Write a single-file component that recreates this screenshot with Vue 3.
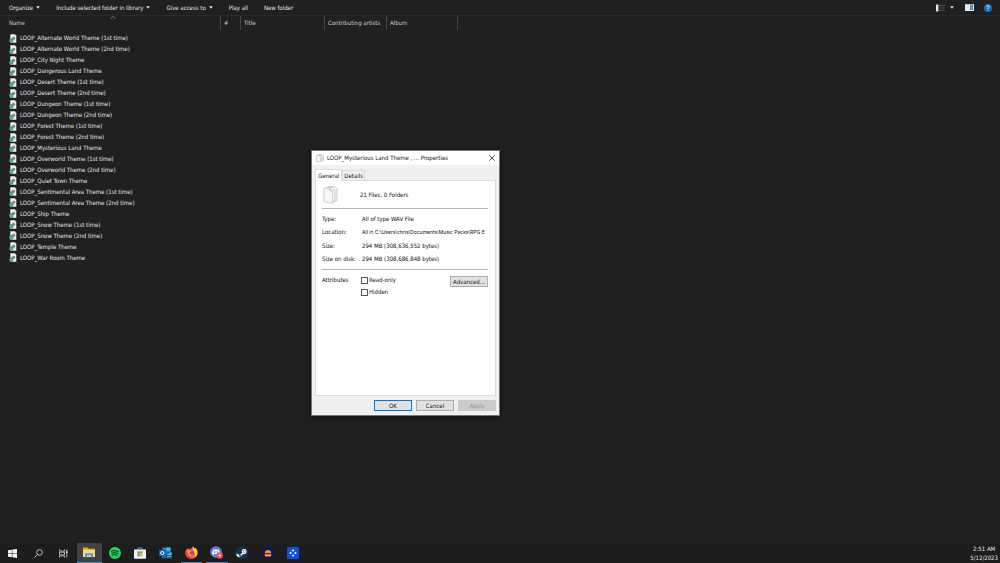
<script setup>
import { ref } from 'vue'

const commands = [
  { label: 'Organize', menu: true },
  { label: 'Include selected folder in library', menu: true },
  { label: 'Give access to', menu: true },
  { label: 'Play all', menu: false },
  { label: 'New folder', menu: false },
]

const files = [
  'LOOP_Alternate World Theme (1st time)',
  'LOOP_Alternate World Theme (2nd time)',
  'LOOP_City Night Theme',
  'LOOP_Dangerous Land Theme',
  'LOOP_Desert Theme (1st time)',
  'LOOP_Desert Theme (2nd time)',
  'LOOP_Dungeon Theme (1st time)',
  'LOOP_Dungeon Theme (2nd time)',
  'LOOP_Forest Theme (1st time)',
  'LOOP_Forest Theme (2nd time)',
  'LOOP_Mysterious Land Theme',
  'LOOP_Overworld Theme (1st time)',
  'LOOP_Overworld Theme (2nd time)',
  'LOOP_Quiet Town Theme',
  'LOOP_Sentimental Area Theme (1st time)',
  'LOOP_Sentimental Area Theme (2nd time)',
  'LOOP_Ship Theme',
  'LOOP_Snow Theme (1st time)',
  'LOOP_Snow Theme (2nd time)',
  'LOOP_Temple Theme',
  'LOOP_War Room Theme',
]

const details = [
  { label: 'Type:', value: 'All of type WAV File' },
  { label: 'Location:', value: 'All in C:\\Users\\chris\\Documents\\Music Packs\\RPG E', path: true },
  { label: 'Size:', value: '294 MB (308,636,552 bytes)' },
  { label: 'Size on disk:', value: '294 MB (308,686,848 bytes)' },
]

const readOnly = ref(false)
const hidden = ref(false)
</script>

<template>
  <div class="desktop">
    <header class="commands">
      <button v-for="c in commands" :key="c.label" class="command" type="button">
        {{ c.label }}
        <svg v-if="c.menu" class="caret" viewBox="0 0 5 3"><path d="M0 0h5L2.5 3z" fill="#d8d8d8" /></svg>
      </button>
      <span class="spacer"></span>
      <button class="tool view" type="button" aria-label="Change view">
        <svg width="9" height="8" viewBox="0 0 9 8">
          <path d="M0 .5h2.4v7H0z" fill="#e4e4e4" />
          <path d="M3.5 1.5h2M6.5 1.5h2M3.5 4h2M6.5 4h2M3.5 6.5h2M6.5 6.5h2" stroke="#777" stroke-width=".8" />
        </svg>
        <svg class="caret" viewBox="0 0 5 3"><path d="M0 0h5L2.5 3z" fill="#d8d8d8" /></svg>
      </button>
      <button class="tool" type="button" aria-label="Preview pane">
        <svg width="9" height="7" viewBox="0 0 9 7">
          <path d="M0 0h9v7H0z" fill="#e6ebf0" /><path d="M0 0h9v1H0z" fill="#a5c0d8" />
          <path d="M5 1h3v5H5z" fill="#4f93cc" />
        </svg>
      </button>
      <button class="tool" type="button" aria-label="Help">
        <svg width="8" height="8" viewBox="0 0 8 8">
          <circle cx="4" cy="4" r="4" fill="#0f6fc0" />
          <path d="M2.8 3c0-1.8 2.6-1.7 2.5-.1C5.3 3.9 4 3.8 4 5M4 5.7v.9" fill="none" stroke="#fff" stroke-width=".9" />
        </svg>
      </button>
    </header>

    <main class="browser">
      <div class="columns">
        <span class="column name">Name
          <svg class="sort" viewBox="0 0 6 3"><path d="M.5 2.7 3 .4l2.5 2.3" fill="none" stroke="#a0a0a0" stroke-width=".7" /></svg>
        </span>
        <span class="column number">#</span>
        <span class="column title">Title</span>
        <span class="column artists">Contributing artists</span>
        <span class="column album">Album</span>
      </div>
      <ul class="files">
        <li v-for="f in files" :key="f">
          <svg class="file-icon" width="8" height="9" viewBox="0 0 8 9">
            <path d="M1.300.2h4.500L7.300 1.700v7.100h-6z" fill="#f1f1f1" />
            <path d="M5.800.2v1.500h1.500" fill="#aaa" />
            <circle cx="4.600" cy="4.200" r="1.500" fill="#666" /><circle cx="4.800" cy="4" r=".6" fill="#eee" />
            <circle cx="2.300" cy="6.500" r="2.200" fill="#3c9c79" />
            <path d="m1.200 6.600.9.8 1.300-1.500" fill="none" stroke="#c4e8d8" stroke-width=".5" />
          </svg>
          <span>{{ f }}</span>
        </li>
      </ul>
    </main>

    <section class="dialog" role="dialog" aria-label="Properties">
      <div class="titlebar">
        <svg width="8" height="8" viewBox="0 0 8 8" fill="#fafafa" stroke="#aaa" stroke-width=".6">
          <path d="M3 .5h3l1.300 1.300v4.600H3z" /><path d="M1.800 1h3l1.300 1.300v4.600H1.800z" /><path d="M.6 1.600h3l1.300 1.200v4.800H.6z" />
        </svg>
        <span class="caption">LOOP_Mysterious Land Theme , ... Properties</span>
        <button class="close" type="button" aria-label="Close">
          <svg width="6" height="6" viewBox="0 0 6 6"><path d="m.4.4 5.200 5.200M5.600.4.4 5.600" stroke="#222" stroke-width=".8" /></svg>
        </button>
      </div>
      <div class="tabs">
        <button class="tab active" type="button">General</button>
        <button class="tab" type="button">Details</button>
      </div>
      <div class="page">
        <div class="summary">
          <svg width="15" height="18" viewBox="0 0 15 18" fill="#f6f6f6" stroke="#b3b3b3" stroke-width=".6">
            <path d="M5.500.5h6L14 3v11.500l-8.500-1z" />
            <path d="M3.200 1.200h6L12 4v12l-8.800-1.500z" />
            <path d="M.8 2.200h6L9.600 5v12.400L.8 15.800z" /><path d="M6.800 2.200V5h2.800" fill="#ddd" />
          </svg>
          <span>21 Files, 0 Folders</span>
        </div>
        <dl class="details">
          <template v-for="d in details" :key="d.label">
            <dt>{{ d.label }}</dt>
            <dd :class="{ path: d.path }">{{ d.value }}</dd>
          </template>
        </dl>
        <div class="attributes">
          <span>Attributes</span>
          <div class="checks">
            <label><input v-model="readOnly" type="checkbox" />Read-only</label>
            <label><input v-model="hidden" type="checkbox" />Hidden</label>
          </div>
          <button class="push" type="button">Advanced...</button>
        </div>
      </div>
      <div class="actions">
        <button class="push default" type="button">OK</button>
        <button class="push" type="button">Cancel</button>
        <button class="push" type="button" disabled>Apply</button>
      </div>
    </section>

    <footer class="taskbar">
      <nav class="apps">
        <button type="button" aria-label="Start">
          <svg width="9" height="9" viewBox="0 0 9 9"><path d="M0 1.200 3.900.7v3.500H0zM4.400.6 9 0v4.200H4.400zM0 4.700h3.900v3.500L0 7.700zM4.400 4.700H9V9l-4.600-.7z" fill="#f4f4f4" /></svg>
        </button>
        <button type="button" aria-label="Search">
          <svg width="9" height="9" viewBox="0 0 9 9" fill="none" stroke="#e2e2e2" stroke-width=".8"><circle cx="5.500" cy="3.400" r="2.800" /><path d="M3.500 5.400.4 8.600" /></svg>
        </button>
        <button type="button" aria-label="Task view">
          <svg width="9" height="9" viewBox="0 0 9 9" fill="none" stroke="#d5d5d5" stroke-width=".8"><path d="M.5.4v1.700h5V.4M.5 3.200h5v2.600h-5zM.5 8.600V6.900h5v1.700M7.800.4v8.200" /><path d="M7 2.300h1.600v1.800H7z" fill="#d5d5d5" stroke="none" /></svg>
        </button>
        <button class="open current" type="button" aria-label="File Explorer">
          <svg width="12" height="11" viewBox="0 0 12 11"><path d="M0 .5h4.400l1 1.300H12V10H0z" fill="#e9a82d" /><path d="M0 2.800h12V10H0z" fill="#fbd977" /><path d="M2 10.500V6.300h8v4.200H8V8.200H4v2.300z" fill="#4a9bd8" /></svg>
        </button>
        <button type="button" aria-label="Spotify">
          <svg width="12" height="12" viewBox="0 0 12 12"><circle cx="6" cy="6" r="6" fill="#1ed760" /><path d="M2.400 4.100c2.500-.8 5.200-.5 7.300.7M2.800 6.100c2.100-.6 4.400-.4 6.200.6M3.100 8c1.700-.5 3.600-.3 5.100.6" fill="none" stroke="#17291e" stroke-width="1" stroke-linecap="round" /></svg>
        </button>
        <button type="button" aria-label="Microsoft Store">
          <svg width="12" height="12" viewBox="0 0 12 12"><path d="M3.800 3V1h4.400v2" fill="none" stroke="#39a7e6" stroke-width="1" /><path d="M0 2.500h12v8.300q0 1-1 1H1q-1 0-1-1z" fill="#f0f2f4" /><path d="M3.500 4.400h2.300v2.300H3.500z" fill="#e35335" /><path d="M6.200 4.400h2.300v2.300H6.200z" fill="#7aae28" /><path d="M3.500 7.100h2.300v2.300H3.500z" fill="#2196d8" /><path d="M6.200 7.100h2.300v2.300H6.200z" fill="#eeb624" /></svg>
        </button>
        <button type="button" aria-label="Outlook">
          <svg width="13" height="12" viewBox="0 0 13 12"><path d="M3.500.5h8v6h-8z" fill="#1b8ad5" /><path d="M7.500.5h4v3h-4z" fill="#40bdf0" /><path d="M3 5h9.500v6.200H3z" fill="#1473bd" /><path d="m3.500 5 4.400 3.200L12.500 5v6.200z" fill="#50cdf7" /><path d="M0 2.800h6.600v6.400H0z" fill="#0b62aa" /><circle cx="3.300" cy="6" r="1.600" fill="none" stroke="#fff" stroke-width="1" /><path d="M7.300 8.200h5.200v3.300H7.300z" fill="#1c3b5c" /><path d="M8 9.800h3.700" stroke="#dfeffa" stroke-width=".8" /></svg>
        </button>
        <button class="open" type="button" aria-label="Firefox">
          <svg width="13" height="13" viewBox="0 0 13 13"><path d="M8 .4c1 .7 1.400 1.500 1.700 2.400l1-.8c1.300 1.600 2 3.200 1.800 5.100C12.200 10.500 9.700 12.800 6.400 12.800 3 12.800.4 10.300.4 7c0-2 .7-3.400 1.700-4.800l.4 1.500 1.400-1.600.7 1.500C5.500 3 6.800 2 8 .4z" fill="#ff6a2c" /><path d="M8 .4c1 .7 1.400 1.500 1.700 2.400l1-.8c1.300 1.600 2 3.200 1.800 5.100-.2 1.900-1.100 3.500-2.600 4.500C11.600 7 7 5.300 8 .4z" fill="#ffc832" /><path d="M.4 7c.2 3.300 2.700 5.800 6 5.800 1.700 0 3-.5 4.100-1.500C6 13 2.700 10.500 2.100 6z" fill="#f33a62" /><circle cx="6.600" cy="7.200" r="2.400" fill="#8646dc" /><path d="M2.500 4.800c1.400-.8 2.500.2 4.100.3 0 .9-1.400 1-1.700 1.600.1 1.600 1.800 2.200 3.300 1.400C6.700 11 2.500 9.500 2.500 4.800z" fill="#ff952e" /></svg>
        </button>
        <button class="open" type="button" aria-label="Discord">
          <svg width="13" height="13" viewBox="0 0 13 13"><circle cx="6" cy="6" r="5.800" fill="#7775e8" /><path d="M3.300 3.700q2.700-1 5.400 0Q10 5.700 9.900 8L8.300 8.700l-.7-.8H4.400l-.7.8L2.100 8Q2 5.700 3.300 3.700z" fill="#fff" /><circle cx="4.500" cy="6.100" r=".8" fill="#6664d8" /><circle cx="7.500" cy="6.100" r=".8" fill="#6664d8" /><circle cx="9.700" cy="9.500" r="3.200" fill="#e9515e" /><circle cx="9.700" cy="9.500" r="1.100" fill="#fff" /></svg>
        </button>
        <button type="button" aria-label="Steam">
          <svg width="12" height="12" viewBox="0 0 12 12"><circle cx="6" cy="6" r="6" fill="#143653" /><path d="M.2 6.500 3.800 8l2.500-2.300 1.500-2.500 2.700 1.500-1.300 2-2.800.9-2.100 2.300-1.900.3L.7 8.700z" fill="#f5f7f9" /><circle cx="8.200" cy="4.400" r="2.400" fill="#f5f7f9" /><circle cx="8.200" cy="4.400" r="1.200" fill="#4a6378" /><circle cx="8.200" cy="4.400" r=".8" fill="#f5f7f9" /><circle cx="4" cy="8.800" r="1" fill="#35536c" /></svg>
        </button>
        <button type="button" aria-label="Audio player">
          <svg width="12" height="12" viewBox="0 0 12 12"><circle cx="6" cy="6" r="5.800" fill="#0d1474" /><path d="M2.700 6Q3 3 6 3t3.300 3z" fill="#f28b32" /><path d="M2.700 6h6.600v1.200H2.700z" fill="#5e3220" /><path d="M2.700 7.200h6.600v1.400q0 1-1 1H3.700q-1 0-1-1z" fill="#ffa32f" /></svg>
        </button>
        <button type="button" aria-label="Game launcher">
          <svg width="12" height="12" viewBox="0 0 12 12"><rect width="12" height="12" rx="1" fill="#0b4fe0" /><path d="m6 2.200 1.300 1.300L6 4.800 4.700 3.500zM3.500 4.700 4.800 6 3.500 7.300 2.200 6zM8.500 4.700 9.800 6 8.500 7.300 7.200 6zM6 7.200l1.300 1.300L6 9.800 4.700 8.500z" fill="#fff" /></svg>
        </button>
      </nav>
      <div class="clock"><time>2:51 AM</time><time>5/12/2023</time></div>
    </footer>
  </div>
</template>

<style>
html, body { background: #202020; }
</style>

<style scoped>
* { box-sizing: border-box; }
button { margin: 0; padding: 0; border: 0; background: none; color: inherit; font: inherit; }
svg { display: block; flex: none; }
.desktop {
  position: relative; display: flex; flex-direction: column; min-height: 100vh;
  background: #202020; color: #e6e6e6;
  font: 6px/8px "DejaVu Sans Condensed", "Open Sans", sans-serif; white-space: nowrap; overflow: hidden;
}
.commands { display: flex; align-items: center; gap: 16px; height: 16px; padding: 0 8px 0 9px; border-bottom: 1px solid #2a2a2a; }
.command, .tool { display: flex; align-items: center; gap: 3px; }
.caret { width: 4px; height: 3px; }
.spacer { flex: 1; }
.tool.view { gap: 5px; margin-right: -5px; }
.tool:last-child { margin-left: -6px; }

.browser { flex: 1; }
.columns { display: flex; height: 14px; color: #cfcfcf; }
.column { position: relative; display: flex; align-items: center; padding-left: 3px; border-right: 1px solid #444; }
.name { width: 221px; padding-left: 9px; }
.number { width: 20px; }
.title { width: 84px; }
.artists { width: 62px; }
.album { width: 71px; }
.sort { position: absolute; left: 110px; top: 0; width: 6px; height: 3px; }
.files { display: grid; grid-auto-rows: 1fr; height: 230px; margin: 3px 0 0; padding: 0 0 0 9px; list-style: none; }
.files li { display: flex; align-items: center; gap: 3px; }

.dialog {
  position: absolute; left: 311px; top: 150px; display: flex; flex-direction: column; width: 189px; height: 266px;
  border: 1px solid #777; background: #f0f0f0; color: #111; box-shadow: 0 1px 6px #0008;
}
.titlebar { display: flex; align-items: center; gap: 3px; height: 14px; padding: 0 4px; background: #fff; }
.caption { flex: 1; }
.tabs { display: flex; align-items: flex-end; height: 15px; padding: 0 3px; }
.tab { position: relative; height: 10px; padding: 0 1px; border: 1px solid #dcdcdc; border-bottom: 0; line-height: 8px; }
.tab.active { z-index: 1; height: 12px; margin-bottom: -1px; padding: 0 2px; background: #fff; }
.page { flex: 1; margin: 0 3px; padding: 0 7px 0 6px; border: 1px solid #dcdcdc; background: #fff; }
.summary { display: flex; align-items: center; gap: 22px; height: 28px; padding-left: 1px; border-bottom: 1px solid #b4b4b4; }
.details { display: grid; grid-template-columns: 40px 1fr; grid-auto-rows: 1fr; align-items: center; height: 61px; margin: 0; padding: 3px 0; border-bottom: 1px solid #b4b4b4; }
.details dd { margin: 0; }
.details .path { font: 5px/8px "Inter", sans-serif; }
.attributes { display: flex; align-items: flex-start; padding-top: 6px; }
.attributes > span { width: 39px; }
.checks { display: flex; flex-direction: column; gap: 4px; flex: 1; }
.checks label { display: flex; align-items: center; gap: 1px; }
.checks input { appearance: none; width: 7px; height: 7px; margin: 0; border: 1px solid #555; background: #fff; }
.push { width: 38px; height: 11px; border: 1px solid #adadad; background: #e1e1e1; line-height: 8px; }
.push.default { border-color: #0078d7; }
.push:disabled { border-color: #c8c8c8; background: #ccc; color: #919191; }
.actions { display: flex; justify-content: flex-end; gap: 4px; padding: 4px 3px; }

.taskbar { display: flex; justify-content: space-between; height: 20px; background: #1d1d1d; }
.apps { display: grid; grid-template-columns: repeat(12, 1fr); width: 306px; }
.apps button { display: flex; align-items: center; justify-content: center; }
.apps .open { margin: 0 2px; border-bottom: 1px solid #4d7fa8; }
.apps .current { margin: 0; background: #414141; border-bottom-color: #5d90b8; }
.clock { display: flex; flex-direction: column; align-items: center; justify-content: center; padding-right: 2px; line-height: 9px; }
</style>
